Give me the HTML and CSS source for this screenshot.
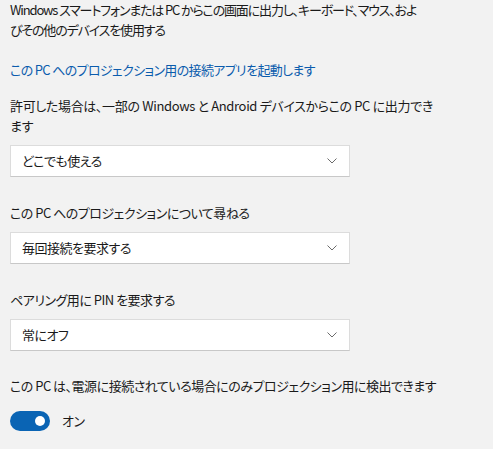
FILE: index.html
```html
<!DOCTYPE html>
<html lang="ja">
<head>
<meta charset="utf-8">
<link rel="stylesheet" href="styles.css">
</head>
<body>
<main class="page">
  <p class="intro">Windows スマートフォンまたは PC からこの画面に出力し、キーボード、マウス、およ<br>びその他のデバイスを使用する</p>
  <a class="link" href="#">この PC へのプロジェクション用の接続アプリを起動します</a>

  <section class="setting first">
    <p class="label wide">許可した場合は、一部の Windows と Android デバイスからこの PC に出力でき<br>ます</p>
    <div class="select"><span>どこでも使える</span><svg class="chev" width="10" height="6" viewBox="0 0 10 6"><path d="M0.5 0.5 L5 5 L9.5 0.5" fill="none" stroke="#6b6b6b" stroke-width="1"/></svg></div>
  </section>

  <section class="setting">
    <p class="label">この PC へのプロジェクションについて尋ねる</p>
    <div class="select"><span>毎回接続を要求する</span><svg class="chev" width="10" height="6" viewBox="0 0 10 6"><path d="M0.5 0.5 L5 5 L9.5 0.5" fill="none" stroke="#6b6b6b" stroke-width="1"/></svg></div>
  </section>

  <section class="setting">
    <p class="label">ペアリング用に PIN を要求する</p>
    <div class="select"><span>常にオフ</span><svg class="chev" width="10" height="6" viewBox="0 0 10 6"><path d="M0.5 0.5 L5 5 L9.5 0.5" fill="none" stroke="#6b6b6b" stroke-width="1"/></svg></div>
  </section>

  <section class="setting last">
    <p class="label">この PC は、電源に接続されている場合にのみプロジェクション用に検出できます</p>
    <div class="toggle-row">
      <span class="toggle"><span class="knob"></span></span>
      <span class="toggle-text">オン</span>
    </div>
  </section>
</main>
</body>
</html>
```

FILE: styles.css
```css
html, body {
  margin: 0;
  padding: 0;
  background: #f2f2f2;
}
body {
  font-family: "Noto Sans CJK JP", "Noto Sans", sans-serif;
  font-size: 13px;
  line-height: 20px;
  letter-spacing: -0.5px;
  color: #1a1a1a;
  font-feature-settings: "palt";
}
.page {
  padding: 0 10px;
  display: flex;
  flex-direction: column;
  align-items: flex-start;
}
p { margin: 0; }
.intro {
  white-space: nowrap;
  letter-spacing: -1.15px;
}
.link {
  margin-top: 20px;
  color: #0b5cad;
  text-decoration: none;
  line-height: 20px;
  letter-spacing: -0.65px;
}
.setting {
  display: flex;
  flex-direction: column;
  gap: 9px;
  margin-top: 26px;
}
.setting.first { margin-top: 16px; }
.setting.last { gap: 15px; margin-top: 25px; }
.label { white-space: nowrap; }
.label.wide { letter-spacing: -0.35px; }
.select {
  box-sizing: border-box;
  width: 340px;
  height: 32px;
  background: #ffffff;
  border: 1px solid #dcdcdc;
  border-bottom-color: #c8c8c8;
  display: flex;
  align-items: center;
  justify-content: space-between;
  padding: 0 12px 0 11px;
}
.chev { display: block; }
.toggle-row {
  display: flex;
  align-items: center;
  gap: 12px;
}
.toggle {
  width: 40px;
  height: 20px;
  border-radius: 10px;
  background: #0a64b4;
  display: flex;
  align-items: center;
  justify-content: flex-end;
  padding-right: 5px;
  box-sizing: border-box;
}
.knob {
  width: 10px;
  height: 10px;
  border-radius: 50%;
  background: #ffffff;
}
```
